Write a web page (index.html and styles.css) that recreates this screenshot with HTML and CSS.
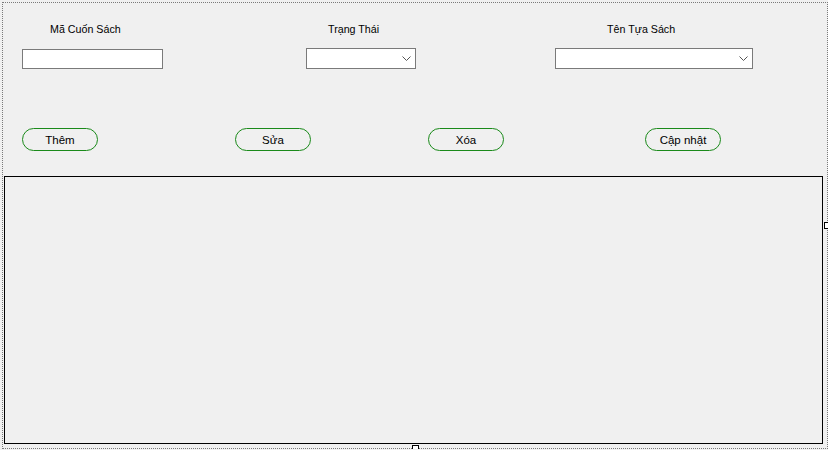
FILE: index.html
```html
<!DOCTYPE html>
<html lang="vi">
<head>
<meta charset="utf-8">
<title>Cuốn Sách</title>
<link rel="stylesheet" href="styles.css">
</head>
<body>
<div class="frame">
  <div class="fields">
    <div class="field f1">
      <label class="lbl l1">Mã Cuốn Sách</label>
      <div class="textbox"></div>
    </div>
    <div class="field f2">
      <label class="lbl l2">Trạng Thái</label>
      <div class="combo c2">
        <svg class="chev" width="9" height="5" viewBox="0 0 9 5"><path d="M0.5 0.5 L4.5 4.5 L8.5 0.5" fill="none" stroke="#555" stroke-width="1"/></svg>
      </div>
    </div>
    <div class="field f3">
      <label class="lbl l3">Tên Tựa Sách</label>
      <div class="combo c3">
        <svg class="chev" width="9" height="5" viewBox="0 0 9 5"><path d="M0.5 0.5 L4.5 4.5 L8.5 0.5" fill="none" stroke="#555" stroke-width="1"/></svg>
      </div>
    </div>
  </div>
  <div class="buttons">
    <button class="btn b1">Thêm</button>
    <button class="btn b2">Sửa</button>
    <button class="btn b3">Xóa</button>
    <button class="btn b4">Cập nhật</button>
  </div>
  <div class="panel"></div>
  <span class="handle h-right"></span>
  <span class="handle h-bottom"></span>
</div>
</body>
</html>
```
FILE: styles.css
```css
html, body {
  margin: 0;
  padding: 0;
  background: #f0f0f0;
  font-family: "Liberation Sans", Arial, sans-serif;
  font-size: 11px;
  color: #000;
}
.frame {
  position: relative;
  margin: 2px 0 0 2px;
  width: 824px;
  height: 445px;
  border: 1px dotted #7a7a7a;
  box-sizing: content-box;
}
.fields {
  display: flex;
  align-items: flex-start;
  padding-top: 19px;
}
.field {
  display: flex;
  flex-direction: column;
}
.f1 { margin-left: 19px; }
.f2 { margin-left: 143px; }
.f3 { margin-left: 139px; }
.lbl {
  height: 14px;
  line-height: 14px;
  white-space: nowrap;
  font-size: 10.7px;
}
.l1 { margin-left: 28px; }
.l2 { margin-left: 22px; }
.l3 { margin-left: 52px; }
.textbox {
  margin-top: 13px;
  width: 139px;
  height: 18px;
  background: #fff;
  border: 1px solid #7a7a7a;
}
.combo {
  margin-top: 12px;
  height: 19px;
  background: #fff;
  border: 1px solid #7a7a7a;
  display: flex;
  align-items: center;
  justify-content: flex-end;
  padding-right: 4px;
  box-sizing: content-box;
}
.c2 { width: 104px; }
.c3 { width: 192px; }
.chev { display: block; }
.buttons {
  display: flex;
  margin-top: 59px;
  padding-left: 19px;
}
.btn {
  width: 76px;
  height: 23px;
  border: 1px solid #1a8a1a;
  border-radius: 12px;
  background: #f0f0f0;
  font-family: "Liberation Sans", Arial, sans-serif;
  font-size: 11.5px;
  color: #000;
  padding: 0;
  line-height: 20px;
}
.b2 { margin-left: 137px; }
.b3 { margin-left: 117px; }
.b4 { margin-left: 141px; }
.panel {
  margin-top: 25px;
  margin-left: 1px;
  width: 817px;
  height: 266px;
  border: 1px solid #000;
}
.handle {
  position: absolute;
  width: 5px;
  height: 5px;
  background: #fff;
  border: 1px solid #000;
}
.h-right { left: 821px; top: 219px; }
.h-bottom { left: 409px; top: 442px; }
```
